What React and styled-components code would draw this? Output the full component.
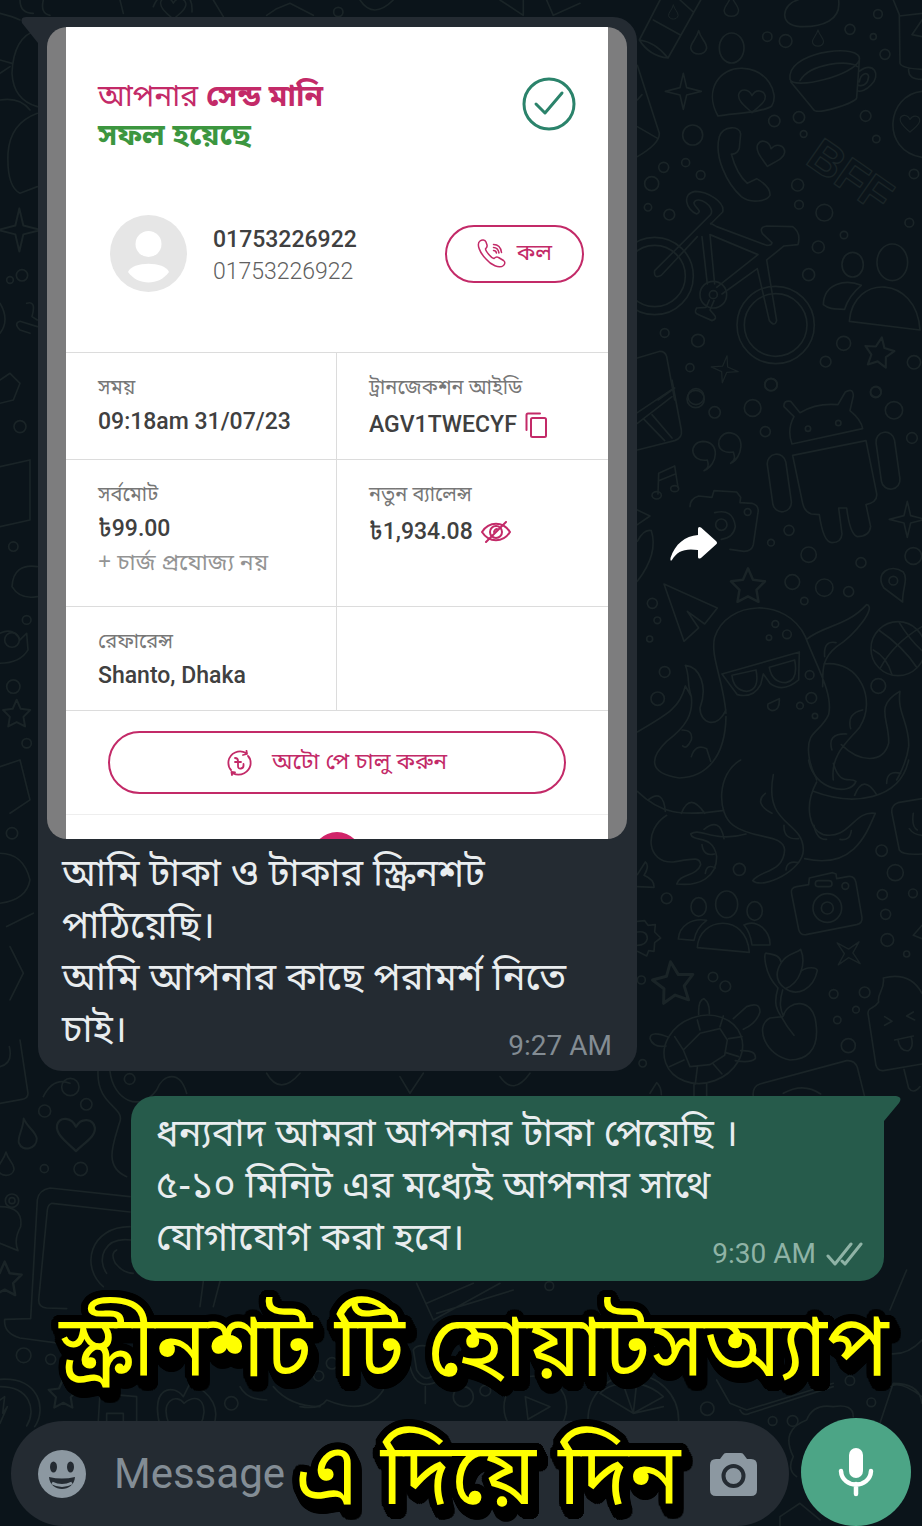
import React from 'react';
import styled, { createGlobalStyle } from 'styled-components';

const PINK = '#c32a68';
const BENGALI = '"Noto Sans Bengali", "Noto Sans", "Liberation Sans", sans-serif';

const GlobalStyle = createGlobalStyle`
  *, *::before, *::after { box-sizing: border-box; }
  body { margin: 0; background: #0b141a; font-family: Roboto, ${BENGALI}; }
  p, dl, dd, h1, h2 { margin: 0; font-weight: 400; }
  button { font: inherit; cursor: pointer; }
`;

const Page = styled.div`
  position: relative;
  display: flex;
  flex-direction: column;
  min-height: 100vh;
  overflow: hidden;
  background: #0b141a;
`;

const WallpaperSvg = styled.svg`
  position: absolute;
  inset: 0;
  width: 100%;
  height: 100%;
  fill: none;
  stroke: #1a2427;
  stroke-width: 5;
  stroke-linecap: round;
  stroke-linejoin: round;
`;

const Thread = styled.main`
  position: relative;
  display: flex;
  flex-direction: column;
  gap: 25px;
  flex: 1;
  padding: 17px 38px 0;
`;

const IncomingRow = styled.div`
  display: flex;
  align-items: center;
  gap: 33px;
`;

const Bubble = styled.article`
  position: relative;
  border-radius: 24px;
  background: ${(p) => (p.$own ? '#265b4b' : '#242b32')};
  color: #e9edef;
`;

const IncomingBubble = styled(Bubble)`
  flex: 0 0 599px;
  max-width: calc(100% - 80px);
  padding: 10px 10px 12px 9px;
`;

const OwnBubble = styled(Bubble).attrs({ $own: true })`
  margin-left: 93px;
  padding: 15px 21px 14px 25px;
`;

const Tail = styled.svg`
  position: absolute;
  top: 0;
  ${(p) => (p.$side === 'left' ? 'left: -18px;' : 'right: -17px;')}
`;

const Body = styled.div`
  display: grid;
  padding: ${(p) => (p.$inset ? '12px 15px 0' : '0')};
  > * { grid-area: 1 / 1; }
`;

const MessageText = styled.p`
  font-family: ${BENGALI};
  font-size: 38px;
  line-height: 52px;
`;

const Stamp = styled.div`
  display: flex;
  align-items: center;
  gap: 10px;
  align-self: end;
  justify-self: end;
  margin-bottom: -3px;
  font-size: 28px;
  line-height: 32px;
  color: ${(p) => (p.$own ? '#8fb3a6' : '#838c93')};
`;

const ForwardButton = styled.button`
  display: flex;
  padding: 0;
  border: 0;
  background: none;
`;

const Media = styled.div`
  position: relative;
  overflow: hidden;
  height: 812px;
  padding: 0 19px;
  border-radius: 20px;
  background: #7d7d7e;
`;

const Receipt = styled.section`
  height: 100%;
  background: #fff;
  color: #404040;
`;

const ReceiptHead = styled.header`
  display: flex;
  justify-content: space-between;
  align-items: flex-start;
  padding: 50px 32px 0;
`;

const ReceiptTitle = styled.h1`
  padding-top: 2px;
  font-family: ${BENGALI};
  font-size: 30px;
  line-height: 39px;
  color: ${PINK};
`;

const Success = styled.strong`
  display: block;
  color: #3c963f;
`;

const Contact = styled.div`
  display: flex;
  align-items: center;
  gap: 26px;
  padding: 58px 24px 60px 44px;
`;

const Numbers = styled.div`
  flex: 1;
  padding-top: 4px;
  font-size: 23px;
  line-height: 32px;
`;

const PrimaryNumber = styled.p`
  font-weight: 500;
`;

const SecondaryNumber = styled.p`
  font-weight: 300;
  color: #606060;
`;

const PillButton = styled.button`
  display: flex;
  align-items: center;
  justify-content: center;
  gap: ${(p) => (p.$wide ? '20px' : '11px')};
  width: ${(p) => (p.$wide ? 'calc(100% - 84px)' : '139px')};
  height: ${(p) => (p.$wide ? '63px' : '58px')};
  margin: ${(p) => (p.$wide ? '20px 42px' : '0')};
  padding: 0;
  border: 2px solid ${PINK};
  border-radius: 32px;
  background: #fff;
  color: ${PINK};
  && { font-family: ${BENGALI}; font-size: 23px; font-weight: 400; }
`;

const Details = styled.dl`
  display: grid;
  grid-template-columns: 1fr 1fr;
  grid-template-rows: 107px 147px 104px;
  border-bottom: 1px solid #dcdcdc;
`;

const Detail = styled.div`
  padding: 19px 16px 0 32px;
  border-top: 1px solid #dcdcdc;
  &:nth-child(odd) { border-right: 1px solid #dcdcdc; }
`;

const Label = styled.dt`
  font-family: ${BENGALI};
  font-size: 20px;
  line-height: 34px;
  color: #777;
`;

const Value = styled.dd`
  display: flex;
  align-items: center;
  gap: 8px;
  font-size: 23px;
  line-height: ${(p) => (p.$action ? '38px' : '32px')};
  font-weight: 500;
`;

const Charge = styled.dd`
  font-family: ${BENGALI};
  font-size: 23px;
  line-height: 38px;
  color: #949494;
`;

const IconButton = styled.button`
  display: flex;
  padding: 0;
  border: 0;
  background: none;
  color: ${(p) => p.$color || PINK};
`;

const NextSheet = styled.div`
  display: flex;
  justify-content: center;
  padding-top: 17px;
  border-top: 1px solid #eee;
`;

const Knob = styled.span`
  flex: none;
  width: 50px;
  height: 50px;
  border-radius: 50%;
  background: #d02469;
`;

const Composer = styled.footer`
  position: relative;
  display: flex;
  align-items: flex-end;
  gap: 12px;
  margin-top: 137px;
  padding: 0 11px;
`;

const InputPill = styled.div`
  display: flex;
  flex: 1;
  align-items: center;
  gap: 28px;
  min-width: 0;
  height: 105px;
  padding: 0 32px 0 27px;
  border-radius: 53px;
  background: #242b32;
`;

const MessageInput = styled.input`
  flex: 1;
  min-width: 0;
  padding: 0;
  border: 0;
  outline: 0;
  background: none;
  color: #e9edef;
  font: 400 42px/50px Roboto, sans-serif;
  &::placeholder { color: #838d95; opacity: 1; }
`;

const MicButton = styled.button`
  display: flex;
  align-items: center;
  justify-content: center;
  flex: 0 0 110px;
  height: 108px;
  padding: 0;
  border: 0;
  border-radius: 50%;
  background: #4ca586;
`;

/* A round black outline, made of shadows set on a ring about the given centre. */
const ring = (radius, dx, dy) =>
  Array.from({ length: 24 }, (_, i) => {
    const angle = (i * Math.PI) / 12;
    const x = Math.round(dx + radius * Math.cos(angle));
    const y = Math.round(dy + radius * Math.sin(angle));
    return `${x}px ${y}px 0 #000`;
  }).join(', ');

const Caption = styled.h2`
  position: absolute;
  right: 0;
  bottom: -20px;
  left: 0;
  padding-left: 26px;
  text-align: center;
  font-family: ${BENGALI};
  font-size: 86px;
  line-height: 128px;
  color: #ffff00;
  text-shadow: ${ring(7, 0, 0)}, ${ring(7, 2, 4)}, ${ring(7, 4, 8)};
  pointer-events: none;
`;

const CaptionLine = styled.span`
  display: block;
  white-space: nowrap;
  margin-left: ${(p) => (p.$second ? '28px' : '0')};
`;

const STAR = 'M0-34 10-11 34-8 17 9 21 33 0 22-21 33-17 9-34-8-10-11Z';
const SPARK = 'M0-54 10-11 54 0 10 11 0 54-10 11-54 0-10-11Z';
const HEART = 'M0 38C-18 20-46 2-42-20-36-40-10-38 0-16 12-38 38-34 42-14 44 6 18 20 0 38Z';
const DROP = 'M0-38C6-14 24-4 24 14 20 38-20 38-24 14-24-2-6-14 0-38Z';

const dots = (list) => list.map(([x, y, r]) => <circle key={`${x}-${y}`} cx={x} cy={y} r={r} />);

function People() {
  return (
    <>
      <ellipse cx="0" cy="-82" rx="33" ry="40" />
      <path d="M-88 48C-84-46 60-58 68 62Z" />
      <ellipse cx="-84" cy="-74" rx="23" ry="28" />
      <path d="M-60-34C-104-42-142-18-145 22L-98 26C-94 4-82-18-60-34Z" />
      <ellipse cx="84" cy="-62" rx="23" ry="28" />
      <path d="M52-20C92-40 132 0 130 40L76 40C72 10 66-4 52-20Z" />
    </>
  );
}

function Camera() {
  return (
    <>
      <path d="M-105-22Q-110-40-90-44L-54-50-52-70 18-86 28-82 30-68 62-74Q84-78 88-56L106 48Q108 66 90 70L-62 100Q-80 102-84 84Z" />
      <circle cx="2" cy="20" r="43" />
      <circle cx="2" cy="20" r="18" />
      <rect x="-34" y="-62" width="50" height="18" rx="9" />
      <circle cx="56" cy="-46" r="10" />
    </>
  );
}

function Wallpaper() {
  return (
    <WallpaperSvg viewBox="0 0 922 1526" preserveAspectRatio="xMidYMin slice" aria-hidden="true">
      {/* upper right: cup, phone, bicycle, friends */}
      <g transform="translate(620 0) scale(.3333)">
        <path d="M120 0 58 120Q88 168 144 174L242 0M100 60 180 104M58 120Q106 126 144 174M180 0 220 36" />
        <path d={DROP} transform="translate(160 38) scale(.6)" />
        <path d={DROP} transform="translate(334 20) scale(.9)" />
        <path d={DROP} transform="translate(236 130)" />
        <path d={DROP} transform="translate(594 116) scale(.7)" />
        <path d={SPARK} transform="translate(190 274)" />
        <ellipse cx="335" cy="144" rx="37" ry="45" />
        <path d="M294 348C250 270 300 200 370 205 440 208 480 280 455 318 430 338 340 340 294 348Z" />
        <path d={HEART} transform="translate(396 302) scale(.95)" />
        <path d="M534 0C488 10 472 76 540 80 610 82 664 60 656 0" />
        <path d="M510 225C520 150 730 130 718 180 705 225 520 272 510 238ZM540 242C570 190 690 178 712 200M512 245 580 328C590 348 706 308 710 294L718 182M718 214C760 180 786 226 752 256 742 268 720 278 712 272M718 246C722 220 744 214 746 230 744 250 732 260 716 256" />
        <path d="M820 0 838 44 840 190Q846 206 906 208M838 48 906 40M866 208Q864 238 906 238M906 60 876 104 906 110" />
        <path d="M906 274C800 284 780 450 906 472" />
        <path d={HEART} transform="translate(870 370) scale(.7)" />
        <path d="M298 410C310 376 360 376 362 402L358 444Q352 464 334 462 350 522 382 550L410 536Q452 560 450 586C440 604 392 612 364 590 320 550 282 470 298 410Z" />
        <path d={HEART} transform="translate(450 462) rotate(12)" />
        <text x="552" y="488" transform="rotate(35 552 488)" fontFamily="Liberation Sans, sans-serif" fontWeight="700" fontSize="140" strokeWidth="4">BFF</text>
        <path d="M52 196 118 400Q120 430 52 470M52 380 114 416M52 300 66 284" />
        <circle cx="104" cy="828" r="116" />
        <circle cx="104" cy="828" r="92" />
        <circle cx="467" cy="975" r="116" />
        <circle cx="467" cy="975" r="94" />
        <path d="M272 670 290 680 440 736Q456 736 456 728L428 702Q416 682 440 678L518 680Q544 698 534 734L492 738 440 780 470 962Q464 982 448 962L412 806 306 882M270 704 414 764 290 862M246 710 262 852M270 704 284 852M232 710 124 826Q100 838 104 812L272 644C288 620 232 584 222 608 220 622 252 632 230 642 198 630 184 580 226 574 262 574 316 606 308 636L272 672" />
        <circle cx="280" cy="884" r="40" />
        <circle cx="280" cy="884" r="12" />
        <path d="M268 900 258 922 230 924Q220 940 236 944L276 962Q294 956 282 944L270 930 282 902" />
        <ellipse cx="698" cy="794" rx="32" ry="37" />
        <ellipse cx="817" cy="787" rx="46" ry="55" />
        <path d="M724 856C676 836 612 850 610 914 630 930 650 926 674 928 682 900 700 876 724 856ZM688 964C700 820 890 826 900 990Z" />
        <path d={STAR} transform="translate(778 1056) scale(1.3) rotate(10)" />
        <path d={SPARK} transform="translate(314 1108) scale(.76) rotate(10)" />
        <path d="M52 1074 120 1054Q136 1054 140 1070L164 1200M114 1200 164 1164" />
        {dots([[442, 110, 14], [497, 123, 19], [690, 88, 15], [774, 42, 13], [795, 163, 15], [760, 110, 9], [463, 363, 17], [537, 352, 17], [551, 402, 10], [737, 348, 16], [769, 417, 11], [218, 405, 30], [131, 502, 15], [197, 488, 12], [242, 525, 13], [95, 551, 21], [84, 622, 11], [148, 644, 16], [533, 555, 18], [537, 614, 13], [613, 638, 25], [595, 741, 18], [566, 824, 18], [672, 705, 11], [868, 668, 13], [882, 522, 14], [134, 999, 13], [234, 1022, 19], [210, 1103, 12], [453, 1154, 19], [671, 1030, 21], [617, 1085, 16], [882, 1087, 20], [768, 1175, 16], [228, 1190, 24]])}
      </g>
      {/* middle right: robot, camera, octopus */}
      <g transform="translate(620 380) scale(.3333)">
        <path d="M156 0 184 150Q188 174 164 182L52 210M52 98 156 28M52 130 156 50M70 116 134 182M96 104 156 174" />
        <path d="M252 272C268 264 266 252 262 240 210 248 204 188 248 184 302 184 294 256 252 272ZM332 250C348 240 344 228 340 216 284 226 284 164 326 158 382 162 366 236 332 250Z" />
        <path d="M114 342 116 280 164 258 174 322M116 302 166 282" />
        <ellipse cx="110" cy="346" rx="14" ry="11" />
        <ellipse cx="164" cy="326" rx="12" ry="9" />
        <path d="M210 380Q210 356 236 348L276 352 282 332 350 336 362 352 360 368 396 370Q418 376 414 398L400 494Q396 514 372 514L330 508M284 398Q340 384 346 440 340 474 304 478" />
        <circle cx="304" cy="434" r="17" />
        <circle cx="383" cy="396" r="10" />
        <path d="M516 192Q500 150 522 110L492 80Q490 60 512 64L540 98Q590 68 654 74L676 36Q700 22 700 48L690 92Q724 120 728 146ZM518 226 738 182 770 340Q774 366 738 374L752 440Q748 470 712 470 690 464 680 384L656 384 666 462Q664 488 636 488 610 488 598 404L574 402Q554 396 548 370Z" />
        <rect x="450" y="222" width="56" height="174" rx="28" transform="rotate(-8 478 309)" />
        <rect x="776" y="156" width="56" height="172" rx="28" transform="rotate(-8 804 242)" />
        <path d={SPARK} transform="translate(862 418)" />
        <path d={STAR} transform="translate(384 616) scale(1.5)" />
        <path d="M132 612 292 684 254 732 202 694 236 744 192 784ZM52 390 90 408 52 434M52 604Q116 520 94 452 72 446 52 484" />
        <path d="M848 666 792 624C762 580 812 548 850 576 866 596 846 630 848 666Z" />
        <circle cx="820" cy="602" r="13" />
        <circle cx="834" cy="806" r="81" />
        <path d="M776 750Q850 800 890 862M838 728Q870 780 906 812M760 810Q800 830 816 884M906 740Q820 790 780 866" />
        <path d="M318 1010C316 1130 260 1192 178 1194 80 1180 92 1130 140 1084 200 1040 220 1000 214 950L196 918C180 980 150 1000 52 1056M318 990C290 1050 240 1030 240 984 264 920 240 860 196 856 210 890 200 910 214 950M318 1000C310 900 270 830 284 772 320 660 500 650 556 770 590 860 640 940 626 1004 600 1060 560 1050 566 1120 570 1170 590 1190 590 1200M560 778C610 736 680 740 740 674 770 680 710 760 650 800 600 840 610 880 608 920M612 852C720 840 770 960 720 1040 690 1080 630 1120 640 1200M664 1094C720 1150 790 1150 806 1090 810 1020 760 980 840 934 830 1000 870 1030 866 1100 860 1150 830 1200 830 1200" />
        <path d="M306 882 538 816 536 900Q490 940 450 910L430 882 422 914Q400 956 352 944ZM336 886 408 870Q420 930 380 934 340 930 336 886ZM448 862 524 840Q536 900 498 908 456 908 448 862Z" />
        <path d="M444 972 478 956Q480 992 456 992 440 988 444 972ZM186 1050Q220 1050 214 1080 200 1110 188 1098M214 1130Q226 1090 260 1106L272 1144M614 830Q610 780 648 788M692 1046Q680 1000 728 990M636 1110Q620 1060 680 1062" />
        {dots([[227, 57, 26], [284, 97, 17], [398, 84, 25], [453, 14, 18], [436, 155, 15], [767, 37, 16], [822, 91, 26], [876, 174, 16], [564, 146, 8], [655, 129, 8], [507, 451, 15], [453, 488, 10], [566, 524, 23], [723, 548, 15], [880, 528, 25], [517, 606, 22], [613, 623, 26], [686, 635, 15], [553, 663, 11], [97, 670, 15], [112, 721, 10], [89, 777, 9], [134, 876, 16], [113, 956, 20], [466, 732, 10], [501, 763, 13], [447, 773, 8], [569, 885, 13], [574, 954, 16], [540, 977, 10], [585, 1008, 8], [775, 918, 22]])}
      </g>
      {/* lower right: tentacles, people, camera, plant, turtle */}
      <g transform="translate(620 760) scale(.3333)">
        <path d="M52 94C120 160 180 170 308 152M362 0C290 40 290 160 340 196 400 240 490 220 494 270 490 340 420 330 398 362 430 390 550 330 550 270 550 180 430 200 460 44M140 166C70 210 80 310 160 306 220 296 240 290 242 314 230 350 180 340 170 372 240 380 290 350 290 290 280 220 220 250 212 222 240 200 280 250 378 222M580 94C700 140 840 120 866 0M566 0C580 90 690 110 708 64 690 50 660 80 640 10M590 66C550 140 570 210 610 224 690 240 700 150 766 160 740 220 700 330 554 296" />
        <path d="M84 120Q130 84 136 154M184 160Q210 94 254 160M252 208Q300 170 312 236M246 254Q250 290 284 282M256 340Q260 310 286 324M456 160Q400 130 436 100M492 196Q490 240 536 236M498 330Q500 300 536 308M704 106Q730 40 770 104M800 70Q800 30 842 40M582 196Q590 240 620 238M660 238Q690 244 694 212" />
        <g transform="translate(320 515)"><People /></g>
        <g transform="translate(620 424)"><Camera /></g>
        <path d="M906 116 834 128Q812 136 816 160L838 270Q848 286 906 282M880 160Q874 200 892 210M868 206Q880 224 906 226" />
        <path d={STAR} transform="translate(160 666) scale(1.8) rotate(-8)" />
        <path d={SPARK} transform="translate(686 580) scale(.86) rotate(42)" />
        <path d="M474 684C430 640 430 570 440 580 470 584 480 590 484 608 500 580 530 580 542 568 560 610 540 670 496 686 460 660 470 630 484 608M542 634C560 620 590 620 592 632 580 690 530 710 496 686M474 684C460 730 470 750 484 770 500 800 510 812 522 826M488 690C476 730 482 750 490 768 502 720 580 710 588 790 600 880 550 900 510 900 440 890 400 800 450 774L488 770" />
        <ellipse cx="250" cy="868" rx="120" ry="100" transform="rotate(-20 250 868)" />
        <path d="M190 870 240 820 300 806 322 840 314 886 270 914 210 920ZM190 870 164 830M240 810 232 780M300 800 310 768M326 836 366 830M318 878 356 890M280 912 306 942M232 922 226 972M192 900 148 920M340 776 380 740Q420 724 420 756 410 790 370 808M236 764Q234 720 252 716 270 730 268 762M146 832Q90 810 90 836 100 864 138 858M362 872Q410 870 406 896 390 910 346 902M222 974V1010M260 970V1010" />
        <path d="M790 654C796 690 770 700 776 726 760 750 744 740 744 760L768 916Q774 934 790 932L906 912M790 654Q870 634 906 700M852 928 866 984Q880 1004 900 980M794 770 816 784 794 796M880 756 860 768 884 780M824 840 880 828M834 840Q840 876 866 872 882 860 874 832M400 1010Q396 980 420 972L680 902Q704 900 712 922L734 1010M490 1000Q550 966 602 1002M906 496 880 526 906 536" />
        <path d="M52 484 74 482 84 496 106 494 104 516 122 534 104 548 102 574 86 572 80 588 52 574M52 516Q82 512 82 536 78 556 52 556M52 344 76 306Q90 316 72 346 104 360 102 382L52 380M90 1000 110 968Q124 980 124 1004" />
        {dots([[358, 328, 18], [140, 415, 16], [785, 272, 17], [826, 338, 24], [787, 404, 15], [879, 400, 13], [797, 463, 15], [802, 540, 19], [860, 582, 9], [279, 651, 14], [316, 679, 16], [641, 702, 13], [734, 697, 16], [708, 749, 10], [652, 780, 11], [685, 857, 21], [68, 910, 11], [64, 660, 12]])}
      </g>
      {/* lower left: heart, laptop, compass */}
      <g transform="translate(0 1040) scale(.3333)">
        <path d="M60 0 84 160Q84 176 66 178L0 190M0 80Q40 70 28 20M294 94C290 200 380 200 358 250 340 310 310 380 380 410M330 94C340 180 420 220 470 150 490 100 540 90 560 160" />
        <path d={DROP} transform="translate(80 284) scale(1.15 1.3) rotate(-12)" />
        <path d={DROP} transform="translate(18 374)" />
        <path d={HEART} transform="translate(228 282) scale(1.35)" />
        <circle cx="36" cy="482" r="20" />
        <path d="M0 500Q70 500 62 560 40 600 54 632L0 610M390 470 150 444Q116 450 112 480L92 836M390 516 156 490Q144 494 142 510L116 780Q116 802 140 804L200 806M92 836 14 838Q10 880 60 894L180 910M390 560C270 560 240 680 310 740M392 600C310 590 290 660 320 700M350 630Q330 640 346 670 370 700 400 700" />
        <path d={STAR} transform="translate(14 716) scale(1.5)" />
        <path d={STAR} transform="translate(190 1060) scale(1.3)" />
        <path d="M0 1018C120 1010 140 1110 104 1160M0 1040C90 1040 110 1110 80 1158M0 1080 14 1070 8 1120 22 1100 0 1150M294 1158 300 1060 410 1070V1158M320 1158V1120H370V1158M480 1158C450 1040 520 1030 550 1070L570 1030C640 1060 660 1110 640 1158M506 1150C480 1080 530 1060 552 1090 600 1050 630 1100 600 1158M720 1040Q740 1080 800 1080M820 1040Q870 1100 960 1100M610 724 600 800M660 724 640 800" />
        {dots([[211, 141, 26], [259, 193, 17], [134, 213, 18], [242, 387, 20], [133, 386, 12], [389, 117, 16], [36, 482, 9], [71, 946, 22], [152, 958, 15], [694, 1090, 20]])}
      </g>
      {/* bottom strip behind the caption */}
      <g transform="translate(300 1270) scale(.3333)">
        <path d="M350 40 400 150 600 40M380 100 520 40M410 130 640 60M340 240Q350 220 390 230L410 300Q380 350 350 300ZM330 290Q350 370 420 330M376 350V400M0 410Q60 420 80 390 200 440 250 360" />
        <circle cx="706" cy="412" r="94" />
        <path d="M676 380 750 410 684 448Z" />
        <circle cx="1000" cy="450" r="136" />
        <path d="M1000 430 900 370Q930 340 970 344ZM1000 430 1010 340Q1060 350 1090 380ZM1000 430 1090 410" />
        <path d="M1250 330 1290 400 1340 420 1600 340M1320 420Q1330 440 1350 430L1600 350M1480 560Q1440 480 1520 450 1540 400 1600 410 1660 400 1660 440M1480 560Q1460 600 1490 620M1740 460 1780 340Q1860 340 1866 400M1770 350Q1800 330 1866 380M1760 250Q1820 260 1866 210M1770 120 1820 0M1440 768V740L1500 700 1560 750" />
        {dots([[96, 280, 17], [56, 318, 15], [490, 380, 30], [556, 362, 16], [748, 48, 13], [1222, 416, 20], [1418, 453, 13], [1478, 453, 16], [1650, 332, 14], [1714, 397, 13]])}
      </g>
      {/* top and left edges */}
      <g transform="scale(.3333)">
        <path d="M0 40Q40 50 60 60M60 0Q60 40 100 40M130 0Q120 40 150 46M360 0 370 40M640 0 670 50M1080 0Q1120 60 1180 0M1500 0 1570 46V0M1640 0 1660 46 1740 10" />
        <path d={HEART} transform="translate(520 24) scale(.9)" />
        <path d="M460 20Q480-30 520-10 580-30 576 36M800 46 830 26 870 10 940 46M112 90Q40 110 36 220 40 300 112 320M0 180 36 190M0 220 30 200M112 340Q30 370 24 460 20 560 60 580L112 560M0 300Q60 290 90 330" />
        <path d={SPARK} transform="translate(58 690) scale(1.2)" />
        <path d="M80 910Q110 900 96 950L112 960M112 980 60 964Q40 970 60 990L90 1000M0 910Q30 960 0 1000M0 1140 30 1120 60 1150 40 1200 0 1210M0 1400 90 1380V1560L0 1580M112 1700Q40 1690 36 1760 60 1800 112 1790M0 1900Q40 1880 60 1920L80 1900 84 1950Q60 1990 0 1990M0 2300 60 2280 90 2400 30 2440M0 2560Q70 2560 90 2640 80 2700 0 2710M20 2780 100 2740M30 2840 70 2920 30 3000M130 3290Q160 3230 210 3250M800 3220Q840 3290 900 3220M1200 3230 1230 3280 1270 3220M1500 3230Q1540 3290 1590 3220" />
        <path d={STAR} transform="translate(50 2140) scale(1.2)" />
        {dots([[66, 826, 17], [30, 840, 10], [60, 1280, 18], [40, 1640, 14], [80, 1860, 13], [40, 2060, 20], [80, 2230, 14], [36, 2500, 17], [1015, 36, 14], [36, 1920, 22]])}
      </g>
    </WallpaperSvg>
  );
}

const lineIcon = { fill: 'none', stroke: 'currentColor', strokeLinecap: 'round', strokeLinejoin: 'round', 'aria-hidden': true };

const CheckCircle = () => (
  <svg width="54" height="54" viewBox="0 0 54 54" {...lineIcon} stroke="#2b836b" strokeWidth="3">
    <circle cx="27" cy="27" r="25" />
    <path d="M14 27 23 36 40 16" />
  </svg>
);

const Avatar = () => (
  <svg width="77" height="77" viewBox="0 0 77 77" aria-hidden="true">
    <circle cx="38.5" cy="38.5" r="38.5" fill="#e6e6e6" />
    <circle cx="38.5" cy="29" r="13" fill="#fff" />
    <path d="M18 57C22 46 55 46 59 57 49 71 28 71 18 57Z" fill="#fff" />
  </svg>
);

const CallIcon = () => (
  <svg width="29" height="29" viewBox="0 0 29 29" {...lineIcon} strokeWidth="1.5">
    <path d="M3 2C5 .5 8 .5 9 3L10 6C10.500 8 9.500 9 8.500 9.800 8.500 12 14 19 17 19.500 19 17.500 20 17.500 21.500 18.500L26.500 21.500C28.500 23 28 25 26.500 26.500 22 30 14 26 9 20 3 14-1 5 3 2Z" />
    <path d="M16.500 11.500Q19 11.500 19.500 14M16.500 8.500Q21 8.500 22 14M16.500 5.500Q23.500 5.500 24.500 13.500" />
  </svg>
);

const CopyIcon = () => (
  <svg width="22" height="26" viewBox="0 0 22 26" {...lineIcon} strokeWidth="2">
    <path d="M1.500 18V3Q1.500 1.500 3 1.500H15" />
    <rect x="6" y="6" width="15" height="19" rx="1.500" />
  </svg>
);

const HiddenIcon = () => (
  <svg width="30" height="22" viewBox="0 0 30 22" {...lineIcon} strokeWidth="2">
    <path d="M1 11C8 0 22 0 29 11 22 22 8 22 1 11ZM25 1 5 21" />
    <circle cx="15" cy="11" r="6" />
    <path d="M13 11Q14 8 16 8" />
  </svg>
);

const AutoPayIcon = () => (
  <svg width="25" height="26" viewBox="0 0 25 26" {...lineIcon} strokeWidth="1.800">
    <path d="M19 3C12-1 3 3 1.500 11 1 15 2 18 4 20M6 23.500C14 27 22 22 23.500 15 24 11 23 8 21 6M16 5 20 4 19.500 .8M8 22.500 4.500 22 5 25" />
    <path d="M8 8Q11 8 11 11V16Q11 19 14 18.500 17 18 16.500 14M8 12H14" />
  </svg>
);

const ForwardIcon = () => (
  <svg width="48" height="36" viewBox="0 0 48 36" aria-hidden="true">
    <path d="M28 3Q28 0 31 1.500L46 15Q48 17 46 18.500L31 32Q28 33.500 28 31V24C15 22 7 25 2 34Q0 36 .5 32C5 18 15 10 28 9Z" fill="#fff" />
  </svg>
);

const DeliveredIcon = () => (
  <svg width="37" height="25" viewBox="0 0 37 25" {...lineIcon} strokeWidth="3">
    <path d="M2 14 9 22 25 2M19 22 35 2M19 22 16 19" />
  </svg>
);

const SmileIcon = () => (
  <svg width="48" height="48" viewBox="0 0 48 48" aria-hidden="true">
    <circle cx="24" cy="24" r="24" fill="#8c98a1" />
    <ellipse cx="15.500" cy="17" rx="3.500" ry="5.500" fill="#242b32" />
    <ellipse cx="32.500" cy="17" rx="3.500" ry="5.500" fill="#242b32" />
    <path d="M11 27Q24 30 37 27C36 43 12 43 11 27Z" fill="#242b32" />
    <path d="M14 33Q24 38 34 33" fill="none" stroke="#8c98a1" strokeWidth="3" />
  </svg>
);

const CameraIcon = () => (
  <svg width="47" height="44" viewBox="0 0 47 44" aria-hidden="true">
    <path d="M16 1H31Q33 1 34 3L37 7H41Q47 7 47 13V38Q47 44 41 44H6Q0 44 0 38V13Q0 7 6 7H10L13 3Q14 1 16 1Z" fill="#8c98a1" />
    <circle cx="23.500" cy="24" r="10" fill="none" stroke="#242b32" strokeWidth="4" />
  </svg>
);

const MicIcon = () => (
  <svg width="36" height="50" viewBox="0 0 36 50" aria-hidden="true">
    <rect x="11" y="1" width="14" height="30" rx="7" fill="#fff" />
    <path d="M3 24C4 42 32 42 33 24M18 37V47" fill="none" stroke="#fff" strokeWidth="4.500" strokeLinecap="round" />
  </svg>
);

function ReceiptCard() {
  return (
    <Media>
      <Receipt>
        <ReceiptHead>
          <ReceiptTitle>
            আপনার <strong>সেন্ড মানি</strong>
            <Success>সফল হয়েছে</Success>
          </ReceiptTitle>
          <CheckCircle />
        </ReceiptHead>
        <Contact>
          <Avatar />
          <Numbers>
            <PrimaryNumber>01753226922</PrimaryNumber>
            <SecondaryNumber>01753226922</SecondaryNumber>
          </Numbers>
          <PillButton type="button"><CallIcon />কল</PillButton>
        </Contact>
        <Details>
          <Detail>
            <Label>সময়</Label>
            <Value>09:18am 31/07/23</Value>
          </Detail>
          <Detail>
            <Label>ট্রানজেকশন আইডি</Label>
            <Value $action>
              AGV1TWECYF
              <IconButton type="button" aria-label="Copy"><CopyIcon /></IconButton>
            </Value>
          </Detail>
          <Detail>
            <Label>সর্বমোট</Label>
            <Value>৳99.00</Value>
            <Charge>+ চার্জ প্রযোজ্য নয়</Charge>
          </Detail>
          <Detail>
            <Label>নতুন ব্যালেন্স</Label>
            <Value $action>
              ৳1,934.08
              <IconButton type="button" aria-label="Hide balance"><HiddenIcon /></IconButton>
            </Value>
          </Detail>
          <Detail>
            <Label>রেফারেন্স</Label>
            <Value>Shanto, Dhaka</Value>
          </Detail>
          <Detail />
        </Details>
        <PillButton type="button" $wide><AutoPayIcon />অটো পে চালু করুন</PillButton>
        <NextSheet><Knob /></NextSheet>
      </Receipt>
    </Media>
  );
}

export default function App() {
  return (
    <Page>
      <GlobalStyle />
      <Wallpaper />
      <Thread>
        <IncomingRow>
          <IncomingBubble>
            <Tail $side="left" width="44" height="30" viewBox="0 0 44 30" aria-hidden="true">
              <path d="M6 0H44V30H18V26L2 6Q0 0 6 0Z" fill="#242b32" />
            </Tail>
            <ReceiptCard />
            <Body $inset>
              <MessageText>
                আমি টাকা ও টাকার স্ক্রিনশট<br />
                পাঠিয়েছি।<br />
                আমি আপনার কাছে পরামর্শ নিতে<br />
                চাই।
              </MessageText>
              <Stamp>9:27 AM</Stamp>
            </Body>
          </IncomingBubble>
          <ForwardButton type="button" aria-label="Forward"><ForwardIcon /></ForwardButton>
        </IncomingRow>
        <OwnBubble>
          <Tail $side="right" width="44" height="30" viewBox="0 0 44 30" aria-hidden="true">
            <path d="M0 0H39Q46 1 42 7L27 25V30H0Z" fill="#265b4b" />
          </Tail>
          <Body>
            <MessageText>
              ধন্যবাদ আমরা আপনার টাকা পেয়েছি ।<br />
              ৫-১০ মিনিট এর মধ্যেই আপনার সাথে<br />
              যোগাযোগ করা হবে।
            </MessageText>
            <Stamp $own>9:30 AM <DeliveredIcon /></Stamp>
          </Body>
        </OwnBubble>
      </Thread>
      <Composer>
        <InputPill>
          <IconButton type="button" aria-label="Emoji"><SmileIcon /></IconButton>
          <MessageInput type="text" placeholder="Message" aria-label="Message" />
          <IconButton type="button" aria-label="Camera"><CameraIcon /></IconButton>
        </InputPill>
        <MicButton type="button" aria-label="Record voice message"><MicIcon /></MicButton>
      </Composer>
      <Caption>
        <CaptionLine>স্ক্রীনশট টি হোয়াটসঅ্যাপ</CaptionLine>
        <CaptionLine $second>এ দিয়ে দিন</CaptionLine>
      </Caption>
    </Page>
  );
}
